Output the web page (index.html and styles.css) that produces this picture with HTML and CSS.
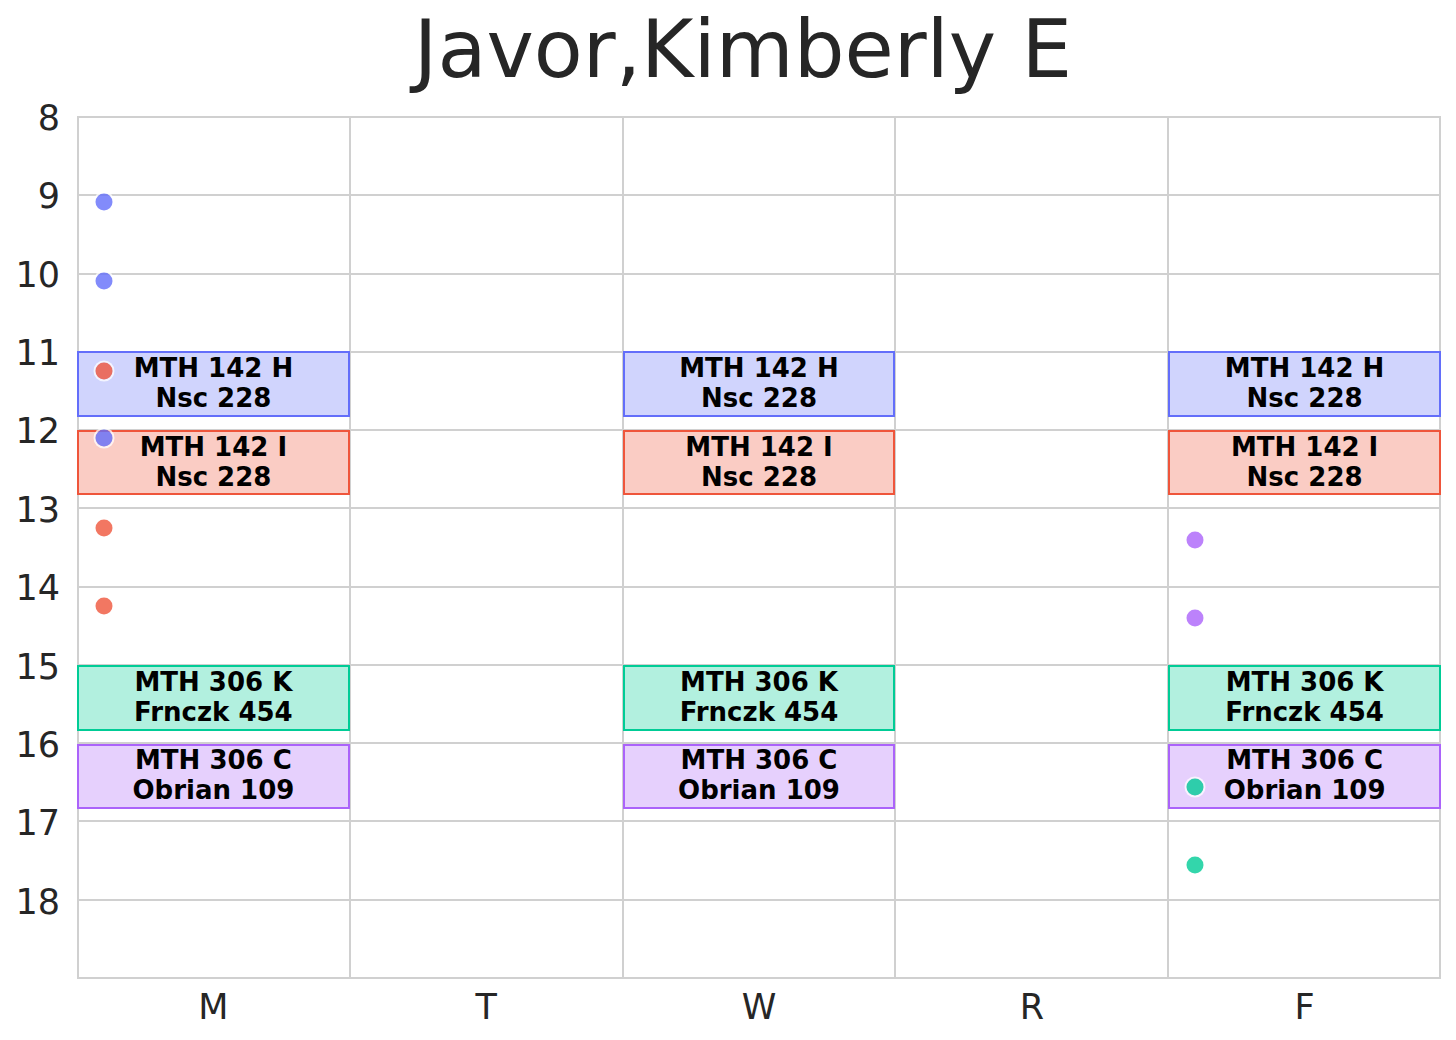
FILE: index.html
```html
<!DOCTYPE html>
<html>
<head>
<meta charset="utf-8">
<link rel="stylesheet" href="styles.css">
</head>
<body>
<div class="figure">
  <h1 class="title">Javor,Kimberly E</h1>
  <div class="chart">
    <div class="yaxis">
      <div class="ytick"><span>8</span></div>
      <div class="ytick"><span>9</span></div>
      <div class="ytick"><span>10</span></div>
      <div class="ytick"><span>11</span></div>
      <div class="ytick"><span>12</span></div>
      <div class="ytick"><span>13</span></div>
      <div class="ytick"><span>14</span></div>
      <div class="ytick"><span>15</span></div>
      <div class="ytick"><span>16</span></div>
      <div class="ytick"><span>17</span></div>
      <div class="ytick"><span>18</span></div>
    </div>
    <div class="plot">
      <div class="vlines">
        <div class="vcol"></div><div class="vcol"></div><div class="vcol"></div><div class="vcol"></div><div class="vcol"></div>
      </div>
      <div class="hlines">
        <div class="hrow"></div><div class="hrow"></div><div class="hrow"></div><div class="hrow"></div><div class="hrow"></div><div class="hrow"></div><div class="hrow"></div><div class="hrow"></div><div class="hrow"></div><div class="hrow"></div><div class="hrow"></div>
      </div>
      <div class="marks">
        <!-- Monday -->
        <div class="box blue" style="left:0%;top:27.273%"><span>MTH 142 H<br>Nsc 228</span></div>
        <div class="box red" style="left:0%;top:36.364%"><span>MTH 142 I<br>Nsc 228</span></div>
        <div class="box green" style="left:0%;top:63.636%"><span>MTH 306 K<br>Frnczk 454</span></div>
        <div class="box purple" style="left:0%;top:72.727%"><span>MTH 306 C<br>Obrian 109</span></div>
        <!-- Wednesday -->
        <div class="box blue" style="left:40%;top:27.273%"><span>MTH 142 H<br>Nsc 228</span></div>
        <div class="box red" style="left:40%;top:36.364%"><span>MTH 142 I<br>Nsc 228</span></div>
        <div class="box green" style="left:40%;top:63.636%"><span>MTH 306 K<br>Frnczk 454</span></div>
        <div class="box purple" style="left:40%;top:72.727%"><span>MTH 306 C<br>Obrian 109</span></div>
        <!-- Friday -->
        <div class="box blue" style="left:80%;top:27.273%"><span>MTH 142 H<br>Nsc 228</span></div>
        <div class="box red" style="left:80%;top:36.364%"><span>MTH 142 I<br>Nsc 228</span></div>
        <div class="box green" style="left:80%;top:63.636%"><span>MTH 306 K<br>Frnczk 454</span></div>
        <div class="box purple" style="left:80%;top:72.727%"><span>MTH 306 C<br>Obrian 109</span></div>
        <!-- dots -->
        <div class="dot dblue col-m" style="top:10.0%"></div>
        <div class="dot dblue col-m" style="top:19.09%"></div>
        <div class="dot dred col-m" style="top:29.55%"></div>
        <div class="dot dblue col-m" style="top:37.27%"></div>
        <div class="dot dred col-m" style="top:47.73%"></div>
        <div class="dot dred col-m" style="top:56.82%"></div>
        <div class="dot dpurple col-f" style="top:49.09%"></div>
        <div class="dot dpurple col-f" style="top:58.18%"></div>
        <div class="dot dgreen col-f" style="top:77.73%"></div>
        <div class="dot dgreen col-f" style="top:86.82%"></div>
      </div>
    </div>
  </div>
  <div class="xaxis">
    <div class="xtick">M</div>
    <div class="xtick">T</div>
    <div class="xtick">W</div>
    <div class="xtick">R</div>
    <div class="xtick">F</div>
  </div>
</div>
</body>
</html>
```

FILE: styles.css
```css
html, body {
  margin: 0;
  padding: 0;
  background: #ffffff;
}

.figure {
  width: 1456px;
  height: 1040px;
  font-family: "DejaVu Sans", sans-serif;
  color: #262626;
  display: flex;
  flex-direction: column;
}

.title {
  margin: 0;
  height: 116px;
  box-sizing: border-box;
  padding-top: 10px;
  padding-left: 30px;
  font-size: 80px;
  font-weight: normal;
  line-height: 80px;
  text-align: center;
  color: #262626;
}

.chart {
  display: flex;
  flex-direction: row;
}

.yaxis {
  width: 77px;
  height: 863px;
  display: flex;
  flex-direction: column;
}

.ytick {
  height: 78.36px;
  flex: none;
  box-sizing: border-box;
  padding-right: 17px;
  text-align: right;
  font-size: 35px;
  line-height: 36px;
}

.ytick span {
  display: block;
  margin-top: -16px;
}

.plot {
  width: 1364px;
  height: 863px;
  display: grid;
  grid-template: 1fr / 1fr;
  position: relative;
}

.vlines, .hlines, .marks {
  grid-area: 1 / 1;
}

.vlines {
  display: flex;
  flex-direction: row;
}

.vcol {
  flex: 1;
  border-left: 2px solid #d0d0d0;
}

.vcol:last-child {
  border-right: 2px solid #d0d0d0;
}

.hlines {
  display: flex;
  flex-direction: column;
}

.hrow {
  flex: 1;
  border-top: 2px solid #d0d0d0;
}

.hrow:last-child {
  border-bottom: 2px solid #d0d0d0;
}

.marks {
  position: relative;
}

.box {
  position: absolute;
  width: 20%;
  height: 7.576%;
  box-sizing: border-box;
  border: 2px solid;
  display: flex;
  align-items: center;
  justify-content: center;
  text-align: center;
  font-weight: bold;
  font-size: 26px;
  line-height: 30px;
  color: #000000;
}

.box span {
  display: block;
  margin-top: -2px;
}

.blue { background: #d0d4fd; border-color: #636efa; }
.red { background: #faccc4; border-color: #ef553b; }
.green { background: #b2f0df; border-color: #00cc96; }
.purple { background: #e6d0fd; border-color: #ab63fa; }

.dot {
  position: absolute;
  width: 17px;
  height: 17px;
  border-radius: 50%;
  transform: translate(-50%, -50%);
  box-shadow: 0 0 0 2px rgba(255, 255, 255, 0.75);
}

.col-m { left: 27px; }
.col-f { left: calc(80% + 27px); }

.dblue { background: rgba(99, 110, 250, 0.8); }
.dred { background: rgba(239, 85, 59, 0.8); }
.dgreen { background: rgba(0, 204, 150, 0.8); }
.dpurple { background: rgba(171, 99, 250, 0.8); }

.xaxis {
  display: flex;
  flex-direction: row;
  padding-left: 77px;
  padding-top: 10px;
}

.xtick {
  width: 272.8px;
  flex: none;
  text-align: center;
  font-size: 35px;
  line-height: 36px;
}
```
